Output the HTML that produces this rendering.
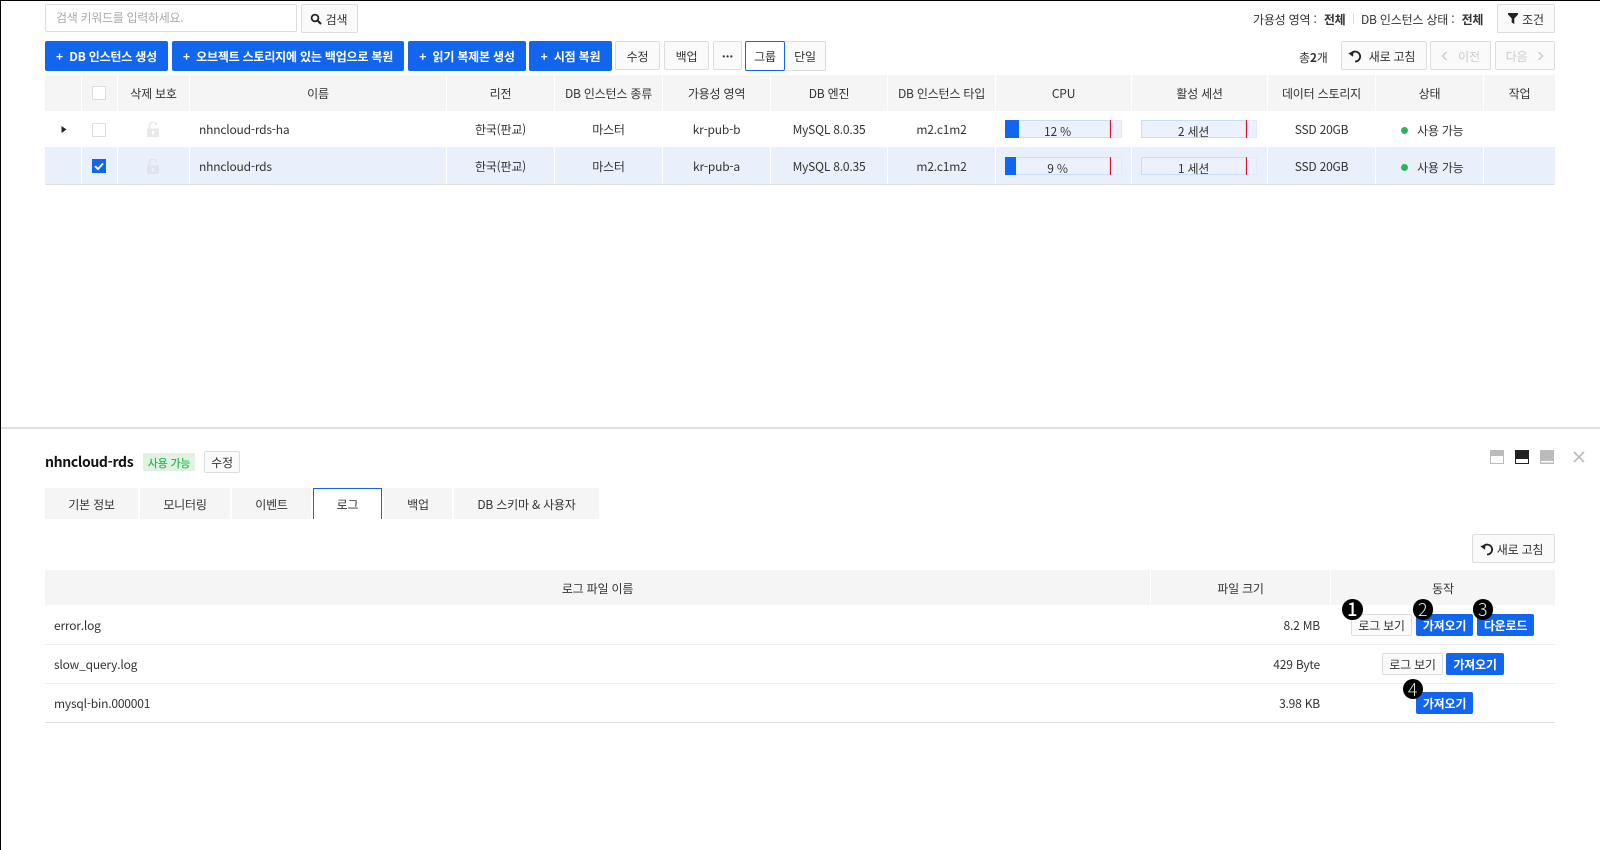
<!DOCTYPE html>
<html lang="ko"><head><meta charset="utf-8"><title>RDS</title>
<style>
html,body{margin:0;padding:0;background:#fff}
body{width:1600px;height:850px;position:relative;overflow:hidden;font:12px/1 "Noto Sans CJK KR","Liberation Sans",sans-serif;color:#333;letter-spacing:-.2px}
.a{position:absolute;box-sizing:border-box;display:flex;align-items:center;justify-content:center;white-space:nowrap}
div.a:not(:empty){padding-top:2px}
.b{border:1px solid #ddd;background:#fafafa;border-radius:2px;color:#333}
.p{background:#1266ed;border-radius:2px;color:#fff;font-weight:700}
.h{background:#f5f5f5;top:75px;height:36px}
.l{justify-content:flex-start}
.bar{position:absolute;box-sizing:border-box;height:18px;background:#ebf2fd;border:1px solid #e0eafa}
.num{width:20.5px;height:20.5px;border-radius:50%;background:#000;color:#fff;font-size:18px;letter-spacing:0}
div.num:not(:empty){padding-top:0}
svg{display:block}
</style></head><body>
<div class="a" style="left:0;top:0;width:1600px;height:1px;background:#000"></div>
<div class="a" style="left:0;top:0;width:1px;height:850px;background:#000"></div>

<div class="a l" style="left:45px;top:4px;width:252px;height:28px;border:1px solid #ddd;border-radius:2px;padding-left:10px;padding-top:0;color:#aaa;letter-spacing:-.3px">검색 키워드를 입력하세요.</div>
<div class="a b" style="left:301px;top:4px;width:57px;height:29px;padding-right:2px"><svg width="12" height="12" viewBox="0 0 12 12" style="margin:-2px 4px 0 0"><circle cx="5" cy="5" r="3.4" fill="none" stroke="#222" stroke-width="1.8"/><path d="M7.5 7.5L11 11" stroke="#222" stroke-width="2"/></svg>검색</div>

<div class="a" style="left:1253px;top:9px;height:20px">가용성 영역 :&nbsp;<b style="margin-left:4px">전체</b></div>
<div class="a" style="left:1353px;top:13px;width:1px;height:11px;background:#ddd"></div>
<div class="a" style="left:1361px;top:9px;height:20px">DB 인스턴스 상태 :&nbsp;<b style="margin-left:4px">전체</b></div>
<div class="a b" style="left:1497px;top:4px;width:58px;height:29px"><svg width="10" height="11" viewBox="0 0 10 11" style="margin:-2px 4px 0 0"><path d="M0 0H10V1.5L6.3 5.5V11L3.7 9.5V5.5L0 1.5Z" fill="#222"/></svg>조건</div>

<div class="a p" style="left:45px;top:41px;width:123px;height:30px">+&nbsp; DB 인스턴스 생성</div>
<div class="a p" style="left:172px;top:41px;width:232px;height:30px">+&nbsp; 오브젝트 스토리지에 있는 백업으로 복원</div>
<div class="a p" style="left:408px;top:41px;width:118px;height:30px">+&nbsp; 읽기 복제본 생성</div>
<div class="a p" style="left:529px;top:41px;width:83px;height:30px">+&nbsp; 시점 복원</div>
<div class="a b" style="left:615px;top:41px;width:45px;height:29px">수정</div>
<div class="a b" style="left:664px;top:41px;width:45px;height:29px">백업</div>
<div class="a b" style="left:713px;top:41px;width:29px;height:29px;font-weight:700">···</div>
<div class="a b" style="left:784px;top:41px;width:42px;height:30px">단일</div>
<div class="a" style="left:745px;top:41px;width:40px;height:30px;border:1px solid #1266ed;border-radius:2px;background:#fff">그룹</div>

<div class="a" style="left:1299px;top:47px;height:20px">총<b>2</b>개</div>
<div class="a b" style="left:1341px;top:41px;width:86px;height:29px;padding-right:4px"><svg width="14" height="14" viewBox="0 0 13 13" style="margin:-2px 7px 0 -1px"><path d="M3 4.2A4.6 4.6 0 1 1 6.5 11.6" fill="none" stroke="#222" stroke-width="1.7"/><path d="M0.3 4L5.2 2.2L4.6 7.2Z" fill="#222"/></svg>새로 고침</div>
<div class="a b" style="left:1430px;top:41px;width:61px;height:29px;color:#ccc"><svg width="7" height="10" viewBox="0 0 7 10" style="margin:-2px 10px 0 0"><path d="M5.5 1L1.5 5L5.5 9" fill="none" stroke="#ccc" stroke-width="1.4"/></svg>이전</div>
<div class="a b" style="left:1495px;top:41px;width:60px;height:29px;color:#ccc">다음<svg width="7" height="10" viewBox="0 0 7 10" style="margin:-2px 0 0 10px"><path d="M1.5 1L5.5 5L1.5 9" fill="none" stroke="#ccc" stroke-width="1.4"/></svg></div>

<!-- main table header -->
<div class="a h" style="left:45px;width:36px"></div>
<div class="a h" style="left:82px;width:35px"></div>
<div class="a h" style="left:118px;width:71px">삭제 보호</div>
<div class="a h" style="left:190px;width:256px">이름</div>
<div class="a h" style="left:447px;width:107px">리전</div>
<div class="a h" style="left:555px;width:107px">DB 인스턴스 종류</div>
<div class="a h" style="left:663px;width:107px">가용성 영역</div>
<div class="a h" style="left:771px;width:116px">DB 엔진</div>
<div class="a h" style="left:888px;width:107px">DB 인스턴스 타입</div>
<div class="a h" style="left:996px;width:135px">CPU</div>
<div class="a h" style="left:1132px;width:135px">활성 세션</div>
<div class="a h" style="left:1268px;width:107px">데이터 스토리지</div>
<div class="a h" style="left:1376px;width:107px">상태</div>
<div class="a h" style="left:1484px;width:71px">작업</div>
<div class="a" style="left:92px;top:86px;width:14px;height:14px;border:1px solid #ddd;background:#fff"></div>

<!-- rows -->
<div class="a" style="left:45px;top:147px;width:1510px;height:1px;background:#eef1f6"></div>
<div class="a" style="left:45px;top:148px;width:1510px;height:36px;background:#e9f0fc"></div>
<div class="a" style="left:45px;top:184px;width:1510px;height:1px;background:#e0e0e0"></div>
<div class="a" style="left:81px;top:147px;width:1px;height:37px;background:#fff"></div>
<div class="a" style="left:117px;top:147px;width:1px;height:37px;background:#fff"></div>
<div class="a" style="left:189px;top:147px;width:1px;height:37px;background:#fff"></div>
<div class="a" style="left:446px;top:147px;width:1px;height:37px;background:#fff"></div>
<div class="a" style="left:554px;top:147px;width:1px;height:37px;background:#fff"></div>
<div class="a" style="left:662px;top:147px;width:1px;height:37px;background:#fff"></div>
<div class="a" style="left:770px;top:147px;width:1px;height:37px;background:#fff"></div>
<div class="a" style="left:887px;top:147px;width:1px;height:37px;background:#fff"></div>
<div class="a" style="left:995px;top:147px;width:1px;height:37px;background:#fff"></div>
<div class="a" style="left:1131px;top:147px;width:1px;height:37px;background:#fff"></div>
<div class="a" style="left:1267px;top:147px;width:1px;height:37px;background:#fff"></div>
<div class="a" style="left:1375px;top:147px;width:1px;height:37px;background:#fff"></div>
<div class="a" style="left:1483px;top:147px;width:1px;height:37px;background:#fff"></div>

<svg class="a" style="left:61px;top:126px" width="6" height="7" viewBox="0 0 6 7"><path d="M0.5 0L5.5 3.5L0.5 7Z" fill="#222"/></svg>
<div class="a" style="left:92px;top:123px;width:14px;height:14px;border:1px solid #ddd;background:#fff"></div>
<svg class="a" style="left:92px;top:159px" width="14" height="14" viewBox="0 0 14 14"><rect width="14" height="14" fill="#1266ed"/><path d="M3 7.2L6 10L11 4.5" fill="none" stroke="#fff" stroke-width="2"/></svg>
<svg class="a" style="left:147px;top:122px" width="12" height="15" viewBox="0 0 12 15"><path d="M2.5 7V3.8A3.3 3.3 0 0 1 9.4 3" fill="none" stroke="#e8e8e8" stroke-width="1.6"/><path d="M0 6.5H12V15H0Z" fill="#e8e8e8"/><rect x="4.8" y="9" width="2.4" height="3.5" fill="#fff"/></svg>
<svg class="a" style="left:147px;top:159px" width="12" height="15" viewBox="0 0 12 15"><path d="M2.5 7V3.8A3.3 3.3 0 0 1 9.4 3" fill="none" stroke="#dfe4ec" stroke-width="1.6"/><path d="M0 6.5H12V15H0Z" fill="#dfe4ec"/><rect x="4.8" y="9" width="2.4" height="3.5" fill="#e9f0fc"/></svg>

<div class="a l" style="left:199px;top:119px;height:20px">nhncloud-rds-ha</div>
<div class="a" style="left:447px;top:119px;width:107px;height:20px">한국(판교)</div>
<div class="a" style="left:555px;top:119px;width:107px;height:20px">마스터</div>
<div class="a" style="left:663px;top:119px;width:107px;height:20px">kr-pub-b</div>
<div class="a" style="left:771px;top:119px;width:116px;height:20px">MySQL 8.0.35</div>
<div class="a" style="left:888px;top:119px;width:107px;height:20px">m2.c1m2</div>
<div class="a" style="left:1268px;top:119px;width:107px;height:20px">SSD 20GB</div>
<div class="a" style="left:1401px;top:127px;width:7px;height:7px;border-radius:50%;background:#2db555"></div>
<div class="a l" style="left:1417px;top:120px;height:20px">사용 가능</div>

<div class="a l" style="left:199px;top:156px;height:20px">nhncloud-rds</div>
<div class="a" style="left:447px;top:156px;width:107px;height:20px">한국(판교)</div>
<div class="a" style="left:555px;top:156px;width:107px;height:20px">마스터</div>
<div class="a" style="left:663px;top:156px;width:107px;height:20px">kr-pub-a</div>
<div class="a" style="left:771px;top:156px;width:116px;height:20px">MySQL 8.0.35</div>
<div class="a" style="left:888px;top:156px;width:107px;height:20px">m2.c1m2</div>
<div class="a" style="left:1268px;top:156px;width:107px;height:20px">SSD 20GB</div>
<div class="a" style="left:1401px;top:164px;width:7px;height:7px;border-radius:50%;background:#2db555"></div>
<div class="a l" style="left:1417px;top:157px;height:20px">사용 가능</div>

<!-- bars -->
<div class="bar" style="left:1005px;top:120px;width:117px"></div>
<div class="a" style="left:1005px;top:120px;width:105px;height:18px;border:1px solid #c9ddf8"></div>
<div class="a" style="left:1005px;top:120px;width:14px;height:18px;background:#1266ed"></div>
<div class="a" style="left:1110px;top:120px;width:1px;height:18px;background:#e8112d"></div>
<div class="a" style="left:1005px;top:122px;width:105px;height:18px">12 %</div>

<div class="bar" style="left:1005px;top:157px;width:117px"></div>
<div class="a" style="left:1005px;top:157px;width:105px;height:18px;border:1px solid #c9ddf8"></div>
<div class="a" style="left:1005px;top:157px;width:10.5px;height:18px;background:#1266ed"></div>
<div class="a" style="left:1110px;top:157px;width:1px;height:18px;background:#e8112d"></div>
<div class="a" style="left:1005px;top:159px;width:105px;height:18px">9 %</div>

<div class="bar" style="left:1141px;top:120px;width:116px"></div>
<div class="a" style="left:1141px;top:120px;width:105px;height:18px;border:1px solid #c9ddf8"></div>
<div class="a" style="left:1246px;top:120px;width:1px;height:18px;background:#e8112d"></div>
<div class="a" style="left:1141px;top:122px;width:105px;height:18px">2 세션</div>

<div class="bar" style="left:1141px;top:157px;width:116px"></div>
<div class="a" style="left:1141px;top:157px;width:105px;height:18px;border:1px solid #c9ddf8"></div>
<div class="a" style="left:1246px;top:157px;width:1px;height:18px;background:#e8112d"></div>
<div class="a" style="left:1141px;top:159px;width:105px;height:18px">1 세션</div>

<!-- bottom panel -->
<div class="a" style="left:1px;top:427px;width:1599px;height:2px;background:#e0e0e0"></div>
<div class="a l" style="left:45px;top:451px;height:22px;font-size:14px;font-weight:700;color:#111;letter-spacing:-.35px;padding-top:0">nhncloud-rds</div>
<div class="a" style="left:143px;top:453px;width:52px;height:18px;background:#e0f2e2;color:#2db555;font-size:11px;border-radius:1px;font-weight:500">사용 가능</div>
<div class="a b" style="left:204px;top:451px;width:36px;height:22px">수정</div>

<svg class="a" style="left:1490px;top:450px" width="14" height="14" viewBox="0 0 14 14"><rect width="14" height="14" fill="#bbb"/><rect x="1" y="6" width="12" height="7" fill="#fff"/></svg>
<svg class="a" style="left:1515px;top:450px" width="14" height="14" viewBox="0 0 14 14"><rect width="14" height="14" fill="#222"/><rect x="1" y="9" width="12" height="4" fill="#fff"/></svg>
<svg class="a" style="left:1540px;top:450px" width="14" height="14" viewBox="0 0 14 14"><rect width="14" height="14" fill="#bbb"/><rect x="1" y="11" width="12" height="1.5" fill="#fff"/></svg>
<svg class="a" style="left:1573px;top:451px" width="12" height="12" viewBox="0 0 12 12"><path d="M1 1L11 11M11 1L1 11" stroke="#bbb" stroke-width="1.6"/></svg>

<div class="a" style="left:45px;top:488px;width:93px;height:31px;background:#f5f5f5">기본 정보</div>
<div class="a" style="left:140px;top:488px;width:90px;height:31px;background:#f5f5f5">모니터링</div>
<div class="a" style="left:232px;top:488px;width:79px;height:31px;background:#f5f5f5">이벤트</div>
<div class="a" style="left:313px;top:488px;width:69px;height:31px;border:1px solid #1266ed;border-bottom:0;background:#fff">로그</div>
<div class="a" style="left:384px;top:488px;width:68px;height:31px;background:#f5f5f5">백업</div>
<div class="a" style="left:454px;top:488px;width:145px;height:31px;background:#f5f5f5">DB 스키마 &amp; 사용자</div>

<div class="a b" style="left:1472px;top:534px;width:83px;height:29px;padding-right:2px"><svg width="14" height="14" viewBox="0 0 13 13" style="margin:-2px 3px 0 -2px"><path d="M3 4.2A4.6 4.6 0 1 1 6.5 11.6" fill="none" stroke="#222" stroke-width="1.7"/><path d="M0.3 4L5.2 2.2L4.6 7.2Z" fill="#222"/></svg>새로 고침</div>

<div class="a" style="left:45px;top:570px;width:1105px;height:35px;background:#f5f5f5">로그 파일 이름</div>
<div class="a" style="left:1151px;top:570px;width:179px;height:35px;background:#f5f5f5">파일 크기</div>
<div class="a" style="left:1331px;top:570px;width:224px;height:35px;background:#f5f5f5">동작</div>

<div class="a l" style="left:54px;top:615px;height:20px">error.log</div>
<div class="a" style="right:280px;top:615px;height:20px">8.2 MB</div>
<div class="a" style="left:45px;top:644px;width:1510px;height:1px;background:#eee"></div>
<div class="a l" style="left:54px;top:654px;height:20px">slow_query.log</div>
<div class="a" style="right:280px;top:654px;height:20px">429 Byte</div>
<div class="a" style="left:45px;top:683px;width:1510px;height:1px;background:#eee"></div>
<div class="a l" style="left:54px;top:693px;height:20px">mysql-bin.000001</div>
<div class="a" style="right:280px;top:693px;height:20px">3.98 KB</div>
<div class="a" style="left:45px;top:722px;width:1510px;height:1px;background:#e0e0e0"></div>

<div class="a b" style="left:1351px;top:614px;width:61px;height:22px">로그 보기</div>
<div class="a p" style="left:1416px;top:614px;width:57px;height:22px">가져오기</div>
<div class="a p" style="left:1477px;top:614px;width:57px;height:22px">다운로드</div>
<div class="a b" style="left:1382px;top:653px;width:61px;height:22px">로그 보기</div>
<div class="a p" style="left:1446px;top:653px;width:58px;height:22px">가져오기</div>
<div class="a p" style="left:1416px;top:692px;width:57px;height:22px">가져오기</div>

<div class="a num" style="left:1342px;top:599px;font-weight:500">1</div>
<div class="a num" style="left:1412.5px;top:599px;font-weight:300;color:#dfe9fb">2</div>
<div class="a num" style="left:1472.5px;top:599px;font-weight:300;color:#dfe9fb">3</div>
<div class="a num" style="left:1402.5px;top:678.5px;font-weight:300;color:#ddd">4</div>
</body></html>
